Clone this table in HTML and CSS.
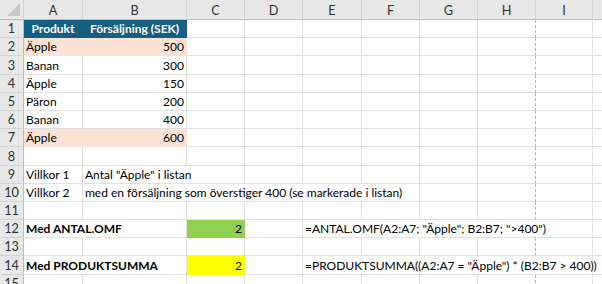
FILE: index.html
```html
<!DOCTYPE html>
<html lang="sv">
<head>
    <meta charset="UTF-8">
    <title>Villkor - Excel</title>
    <link rel="stylesheet" href="styles.css">
</head>
<body>
    <div class="sheet">
        <!-- kolumnrubriker -->
        <div class="hd corner"><span class="tri"></span></div>
        <div class="hd">A</div>
        <div class="hd">B</div>
        <div class="hd">C</div>
        <div class="hd">D</div>
        <div class="hd">E</div>
        <div class="hd">F</div>
        <div class="hd">G</div>
        <div class="hd">H</div>
        <div class="hd">I</div>
        <div class="hd last"></div>

        <!-- rad 1 -->
        <div class="rn">1</div>
        <div class="c head">Produkt</div>
        <div class="c head">Försäljning (SEK)</div>
        <div class="c"></div><div class="c"></div><div class="c"></div><div class="c"></div><div class="c"></div><div class="c brk"></div><div class="c"></div><div class="c last"></div>

        <!-- rad 2 -->
        <div class="rn">2</div>
        <div class="c peach">Äpple</div>
        <div class="c peach num">500</div>
        <div class="c"></div><div class="c"></div><div class="c"></div><div class="c"></div><div class="c"></div><div class="c brk"></div><div class="c"></div><div class="c last"></div>

        <!-- rad 3 -->
        <div class="rn">3</div>
        <div class="c">Banan</div>
        <div class="c num">300</div>
        <div class="c"></div><div class="c"></div><div class="c"></div><div class="c"></div><div class="c"></div><div class="c brk"></div><div class="c"></div><div class="c last"></div>

        <!-- rad 4 -->
        <div class="rn">4</div>
        <div class="c">Äpple</div>
        <div class="c num">150</div>
        <div class="c"></div><div class="c"></div><div class="c"></div><div class="c"></div><div class="c"></div><div class="c brk"></div><div class="c"></div><div class="c last"></div>

        <!-- rad 5 -->
        <div class="rn">5</div>
        <div class="c">Päron</div>
        <div class="c num">200</div>
        <div class="c"></div><div class="c"></div><div class="c"></div><div class="c"></div><div class="c"></div><div class="c brk"></div><div class="c"></div><div class="c last"></div>

        <!-- rad 6 -->
        <div class="rn">6</div>
        <div class="c">Banan</div>
        <div class="c num">400</div>
        <div class="c"></div><div class="c"></div><div class="c"></div><div class="c"></div><div class="c"></div><div class="c brk"></div><div class="c"></div><div class="c last"></div>

        <!-- rad 7 -->
        <div class="rn">7</div>
        <div class="c peach">Äpple</div>
        <div class="c peach num">600</div>
        <div class="c"></div><div class="c"></div><div class="c"></div><div class="c"></div><div class="c"></div><div class="c brk"></div><div class="c"></div><div class="c last"></div>

        <!-- rad 8 -->
        <div class="rn">8</div>
        <div class="c"></div><div class="c"></div><div class="c"></div><div class="c"></div><div class="c"></div><div class="c"></div><div class="c"></div><div class="c brk"></div><div class="c"></div><div class="c last"></div>

        <!-- rad 9 -->
        <div class="rn">9</div>
        <div class="c">Villkor 1</div>
        <div class="c span2">Antal "Äpple" i listan</div>
        <div class="c"></div><div class="c"></div><div class="c"></div><div class="c"></div><div class="c brk"></div><div class="c"></div><div class="c last"></div>

        <!-- rad 10 -->
        <div class="rn">10</div>
        <div class="c">Villkor 2</div>
        <div class="c span5">med en försäljning som överstiger 400 (se markerade i listan)</div>
        <div class="c"></div><div class="c brk"></div><div class="c"></div><div class="c last"></div>

        <!-- rad 11 -->
        <div class="rn">11</div>
        <div class="c"></div><div class="c"></div><div class="c"></div><div class="c"></div><div class="c"></div><div class="c"></div><div class="c"></div><div class="c brk"></div><div class="c"></div><div class="c last"></div>

        <!-- rad 12 -->
        <div class="rn">12</div>
        <div class="c span2 bold">Med ANTAL.OMF</div>
        <div class="c green num">2</div>
        <div class="c"></div>
        <div class="c span5">=ANTAL.OMF(A2:A7; "Äpple"; B2:B7; "&gt;400")</div>
        <div class="c last"></div>

        <!-- rad 13 -->
        <div class="rn">13</div>
        <div class="c"></div><div class="c"></div><div class="c"></div><div class="c"></div><div class="c"></div><div class="c"></div><div class="c"></div><div class="c brk"></div><div class="c"></div><div class="c last"></div>

        <!-- rad 14 -->
        <div class="rn">14</div>
        <div class="c span2 bold">Med PRODUKTSUMMA</div>
        <div class="c yellow num">2</div>
        <div class="c"></div>
        <div class="c span5">=PRODUKTSUMMA((A2:A7 = "Äpple") * (B2:B7 &gt; 400))</div>
        <div class="c last"></div>

        <!-- rad 15 -->
        <div class="rn">15</div>
        <div class="c"></div><div class="c"></div><div class="c"></div><div class="c"></div><div class="c"></div><div class="c"></div><div class="c"></div><div class="c brk"></div><div class="c"></div><div class="c last"></div>
    </div>
</body>
</html>
```

FILE: styles.css
```css
* {
    margin: 0;
    padding: 0;
    box-sizing: border-box;
}

body {
    font-family: Lato, 'Liberation Sans', sans-serif;
    font-size: 12px;
    color: #000;
    background: #fff;
    width: 602px;
    height: 284px;
    overflow: hidden;
}

.sheet {
    display: grid;
    grid-template-columns: 24px 59px 104px 58px 58px 59px 58px 58px 58px 57px 1fr;
    grid-template-rows: 20px repeat(15, 18.2px);
}

/* rubriker */
.hd {
    background: #e8e8e8;
    color: #333;
    font-size: 12.7px;
    border-right: 1px solid #d4d4d4;
    border-bottom: 1px solid #bdbdbd;
    display: flex;
    align-items: center;
    justify-content: center;
    padding-top: 1px;
}

.corner {
    position: relative;
}

.tri {
    position: absolute;
    right: 3px;
    bottom: 3px;
    width: 0;
    height: 0;
    border-left: 13px solid transparent;
    border-bottom: 13px solid #c9c9c9;
}

.rn {
    background: #e8e8e8;
    color: #333;
    font-size: 12.7px;
    border-right: 1px solid #bdbdbd;
    border-bottom: 1px solid #d4d4d4;
    display: flex;
    align-items: flex-end;
    justify-content: center;
    padding-bottom: 1px;
}

/* celler */
.c {
    border-right: 1px solid #e1e1e1;
    border-bottom: 1px solid #e1e1e1;
    display: flex;
    align-items: flex-end;
    padding: 0 2px 1px 2px;
    white-space: nowrap;
    overflow: visible;
}

.c.brk {
    border-right: 1px dashed #b4b4b4;
}

.c.last,
.hd.last {
    border-right: none;
}

.num {
    justify-content: flex-end;
}

.bold {
    font-weight: bold;
}

.span2 {
    grid-column: span 2;
}

.span5 {
    grid-column: span 5;
}

.head {
    background: #156082;
    color: #fff;
    font-weight: bold;
    justify-content: center;
    border-color: #156082;
}

.peach {
    background: #fbe2d5;
    border-color: #fbe2d5;
}

.green {
    background: #92d050;
    border-color: #92d050;
}

.yellow {
    background: #ffff00;
    border-color: #ffff00;
}
```
